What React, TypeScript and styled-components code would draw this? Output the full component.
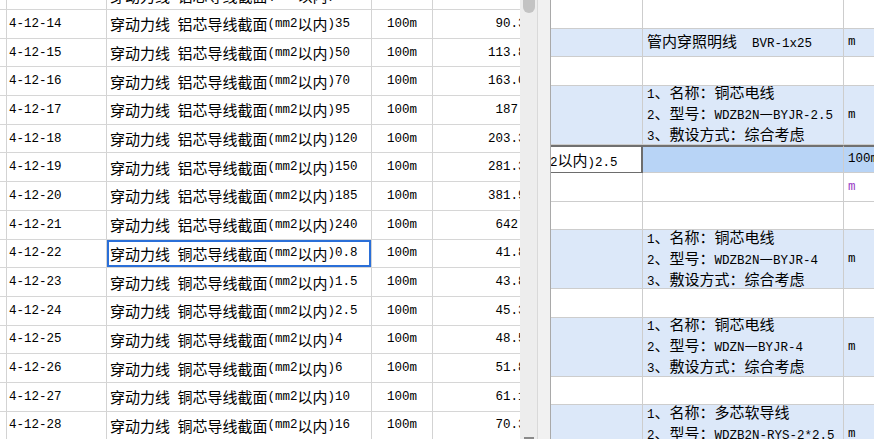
import React from 'react';
import styled, { createGlobalStyle } from 'styled-components';

const Global = createGlobalStyle`
  html, body { margin: 0; padding: 0; background: #fff; }
  body { font-family: "Noto Sans CJK SC", "Liberation Sans", sans-serif; }
`;

const Screen = styled.div`
  display: flex;
  width: 874px;
  height: 439px;
  overflow: hidden;
  background: #fff;
  color: #000;
`;

/* ---------- left table ---------- */
const LeftPanel = styled.div`
  width: 520px;
  flex: none;
  overflow: hidden;
`;

const LeftGrid = styled.div`
  width: 540px;
  margin-top: -18.7px;
`;

const LeftRow = styled.div`
  display: grid;
  grid-template-columns: 6px 101px 265px 61px 107px;
  height: 28.7px;
`;

type Align = 'left' | 'center' | 'right';

const Cell = styled.div<{ $align?: Align; $selected?: boolean }>`
  box-sizing: border-box;
  display: flex;
  align-items: center;
  justify-content: ${(p) =>
    p.$align === 'center' ? 'center' : p.$align === 'right' ? 'flex-end' : 'flex-start'};
  padding: ${(p) => (p.$align === 'right' ? '0 6px 0 3px' : '0 3px')};
  border-right: 1px solid #d3d3d3;
  border-bottom: 1px solid #d6d6d6;
  font-size: 15px;
  white-space: pre;
  overflow: hidden;
  box-shadow: ${(p) => (p.$selected ? 'inset 0 0 0 2px #2a6fd8' : 'none')};
`;

const Lat = styled.span`
  font-family: "Liberation Mono", "DejaVu Sans Mono", monospace;
  font-size: 12.5px;
`;

const Mixed = ({ text }: { text: string }) => (
  <>
    {text
      .split(/([\x20-\x7e]+)/)
      .filter(Boolean)
      .map((p, i) =>
        /^[\x20-\x7e]+$/.test(p) ? <Lat key={i}>{p}</Lat> : <React.Fragment key={i}>{p}</React.Fragment>
      )}
  </>
);

/* ---------- scrollbar + splitter ---------- */
const ScrollTrack = styled.div`
  width: 17px;
  flex: none;
  background: #ededed;
  display: flex;
  flex-direction: column;
  align-items: center;
`;

const ScrollThumb = styled.div`
  width: 12px;
  height: 13px;
  background: #c3c3c3;
  border-radius: 0 0 6px 6px;
`;

const ScrollArrow = styled.div`
  margin-top: auto;
  width: 10px;
  height: 2px;
  background: #8a8a8a;
`;

const Splitter = styled.div`
  width: 13px;
  flex: none;
  box-sizing: border-box;
  background: #f1f1f1;
  border-left: 1px solid #d9d9d9;
`;

/* ---------- right table ---------- */
const RightPanel = styled.div`
  flex: 1;
  overflow: hidden;
  border-left: 1px solid #a9a9a9;
`;

type Tone = 'white' | 'blue' | 'current';

const RightRow = styled.div<{ $h: number }>`
  display: grid;
  grid-template-columns: 92px 201px 120px;
  height: ${(p) => p.$h}px;
`;

const RCell = styled.div<{ $tone: Tone; $editing?: boolean; $unitColor?: string }>`
  box-sizing: border-box;
  display: flex;
  align-items: center;
  padding: 0 3px 0 4px;
  white-space: pre;
  overflow: hidden;
  font-size: 15px;
  color: ${(p) => p.$unitColor || '#000'};
  background: ${(p) =>
    p.$editing ? '#ffffff' : p.$tone === 'blue' ? '#dce8f9' : p.$tone === 'current' ? '#b8d4f6' : '#ffffff'};
  border-right: 1px solid ${(p) => (p.$editing ? '#6d6d6d' : '#cdcdcd')};
  border-bottom: 1px solid ${(p) => (p.$editing ? '#6d6d6d' : '#cdcdcd')};
  border-top: ${(p) => (p.$tone === 'current' ? '2px solid #707070' : 'none')};
  ${(p) => (p.$editing ? 'border-right-width: 2px;' : '')}
`;

const EditText = styled.span`
  margin-left: -5px;
`;

const TextStack = styled.div`
  display: flex;
  flex-direction: column;
  line-height: 18px;
`;

/* ---------- data ---------- */
type LeftItem = { code: string; metal: string; size: string; price: string };

const leftRows: LeftItem[] = [
  { code: '4-12-13', metal: '铝芯', size: '25', price: '66.09' },
  { code: '4-12-14', metal: '铝芯', size: '35', price: '90.35' },
  { code: '4-12-15', metal: '铝芯', size: '50', price: '113.86' },
  { code: '4-12-16', metal: '铝芯', size: '70', price: '163.08' },
  { code: '4-12-17', metal: '铝芯', size: '95', price: '187.5' },
  { code: '4-12-18', metal: '铝芯', size: '120', price: '203.31' },
  { code: '4-12-19', metal: '铝芯', size: '150', price: '281.34' },
  { code: '4-12-20', metal: '铝芯', size: '185', price: '381.93' },
  { code: '4-12-21', metal: '铝芯', size: '240', price: '642.1' },
  { code: '4-12-22', metal: '铜芯', size: '0.8', price: '41.84' },
  { code: '4-12-23', metal: '铜芯', size: '1.5', price: '43.86' },
  { code: '4-12-24', metal: '铜芯', size: '2.5', price: '45.35' },
  { code: '4-12-25', metal: '铜芯', size: '4', price: '48.57' },
  { code: '4-12-26', metal: '铜芯', size: '6', price: '51.82' },
  { code: '4-12-27', metal: '铜芯', size: '10', price: '61.14' },
  { code: '4-12-28', metal: '铜芯', size: '16', price: '70.32' },
];

type RightItem = {
  h: number;
  tone: Tone;
  lines?: string[];
  unit?: string;
  unitColor?: string;
  edit?: string;
};

const spec = (name: string, model: string) => [
  `1、名称：${name}`,
  `2、型号：${model}`,
  '3、敷设方式：综合考虑',
];

const rightRows: RightItem[] = [
  { h: 28.5, tone: 'white' },
  { h: 28.5, tone: 'blue', lines: ['管内穿照明线  BVR-1x25'], unit: 'm' },
  { h: 28.5, tone: 'white' },
  { h: 59, tone: 'blue', lines: spec('铜芯电线', 'WDZB2N—BYJR-2.5'), unit: 'm' },
  { h: 28.5, tone: 'current', edit: '2以内)2.5', unit: '100m' },
  { h: 28.5, tone: 'white', unit: 'm', unitColor: '#9a3cc4' },
  { h: 28.5, tone: 'white' },
  { h: 59, tone: 'blue', lines: spec('铜芯电线', 'WDZB2N—BYJR-4'), unit: 'm' },
  { h: 28.5, tone: 'white' },
  { h: 59, tone: 'blue', lines: spec('铜芯电线', 'WDZN—BYJR-4'), unit: 'm' },
  { h: 28.5, tone: 'white' },
  { h: 59, tone: 'blue', lines: spec('多芯软导线', 'WDZB2N-RYS-2*2.5'), unit: 'm' },
];

export default function App() {
  return (
    <>
      <Global />
      <Screen>
        <LeftPanel>
          <LeftGrid>
            {leftRows.map((r) => (
              <LeftRow key={r.code}>
                <Cell />
                <Cell>
                  <Mixed text={r.code} />
                </Cell>
                <Cell $selected={r.code === '4-12-22'}>
                  <Mixed text={`穿动力线 ${r.metal}导线截面(mm2以内)${r.size}`} />
                </Cell>
                <Cell $align="center">
                  <Mixed text="100m" />
                </Cell>
                <Cell $align="right">
                  <Mixed text={r.price} />
                </Cell>
              </LeftRow>
            ))}
          </LeftGrid>
        </LeftPanel>
        <ScrollTrack>
          <ScrollThumb />
          <ScrollArrow />
        </ScrollTrack>
        <Splitter />
        <RightPanel>
          {rightRows.map((r, i) => (
            <RightRow key={i} $h={r.h}>
              <RCell $tone={r.tone} $editing={!!r.edit}>
                {r.edit && (
                  <EditText>
                    <Mixed text={r.edit} />
                  </EditText>
                )}
              </RCell>
              <RCell $tone={r.tone}>
                {r.lines && (
                  <TextStack>
                    {r.lines.map((l, j) => (
                      <div key={j}>
                        <Mixed text={l} />
                      </div>
                    ))}
                  </TextStack>
                )}
              </RCell>
              <RCell $tone={r.tone} $unitColor={r.unitColor}>
                {r.unit && <Mixed text={r.unit} />}
              </RCell>
            </RightRow>
          ))}
        </RightPanel>
      </Screen>
    </>
  );
}
